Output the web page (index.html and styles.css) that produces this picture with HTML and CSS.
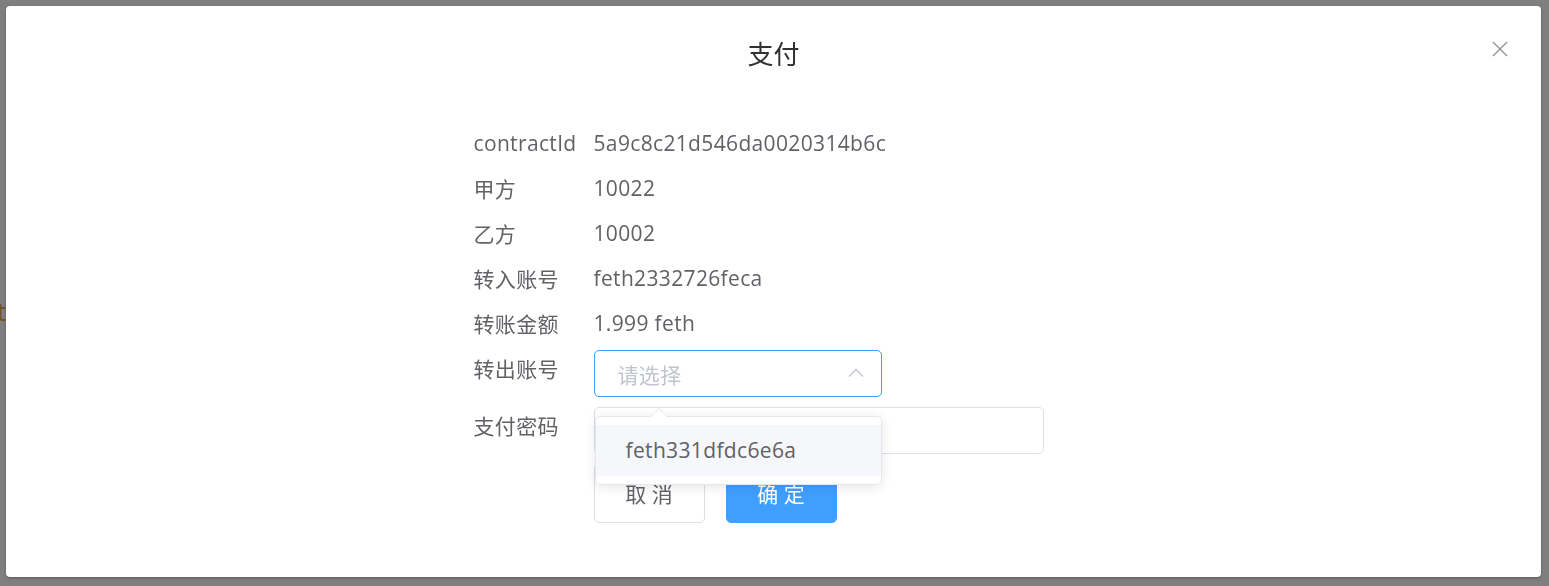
FILE: index.html
```html
<!DOCTYPE html>
<html lang="zh-CN">
<head>
<meta charset="utf-8">
<title>支付</title>
<link rel="stylesheet" href="styles.css">
</head>
<body>
<div class="page">
  <p class="bg-text">t</p>
</div>
<div class="overlay">
  <div class="dialog">
    <div class="dialog-header">
      <span class="dialog-title">支付</span>
      <button class="dialog-close" aria-label="关闭">
        <svg width="16" height="16" viewBox="0 0 16 16"><path d="M1 1L15 15M15 1L1 15" stroke="#909399" stroke-width="1.4" fill="none"/></svg>
      </button>
    </div>
    <div class="form">
      <div class="row"><span class="label">contractId</span><span class="value">5a9c8c21d546da0020314b6c</span></div>
      <div class="row"><span class="label">甲方</span><span class="value">10022</span></div>
      <div class="row"><span class="label">乙方</span><span class="value">10002</span></div>
      <div class="row"><span class="label">转入账号</span><span class="value">feth2332726feca</span></div>
      <div class="row"><span class="label">转账金额</span><span class="value">1.999 feth</span></div>
      <div class="row row-input row-select">
        <span class="label label-input">转出账号</span>
        <div class="select-wrap">
          <div class="select is-focus">
            <span class="placeholder">请选择</span>
            <svg class="chev" width="16" height="10" viewBox="0 0 16 10"><path d="M1 8.5L8 1.5L15 8.5" stroke="#C0C4CC" stroke-width="1.4" fill="none"/></svg>
          </div>
          <div class="dropdown">
            <span class="dropdown-arrow"></span>
            <ul class="options">
              <li class="option hover">feth331dfdc6e6a</li>
            </ul>
          </div>
        </div>
      </div>
      <div class="row row-input row-pass">
        <span class="label label-input">支付密码</span>
        <div class="input"></div>
      </div>
      <div class="row row-buttons">
        <span class="label"></span>
        <div class="buttons">
          <button class="btn btn-default">取 消</button>
          <button class="btn btn-primary">确 定</button>
        </div>
      </div>
    </div>
  </div>
</div>
</body>
</html>
```
FILE: styles.css
```css
html, body {
  margin: 0;
  padding: 0;
  width: 1549px;
  height: 586px;
  overflow: hidden;
  font-family: "Open Sans", "Noto Sans CJK SC", sans-serif;
}
.page {
  width: 1549px;
  height: 586px;
  background: #fff;
  padding-top: 294px;
  box-sizing: border-box;
}
.bg-text {
  margin: 0;
  color: #E6A23C;
  font-size: 25px;
  line-height: 34px;
  text-indent: -3px;
}
.overlay {
  position: fixed;
  inset: 0;
  background: rgba(0, 0, 0, 0.5);
  padding: 6px 8px 9px 6px;
  box-sizing: border-box;
  display: flex;
}
.dialog {
  position: relative;
  flex: 1;
  background: #fff;
  border-radius: 4px;
  box-shadow: 0 1px 3px rgba(0,0,0,.3);
  display: flex;
  flex-direction: column;
  align-items: center;
}
.dialog-header {
  align-self: stretch;
  display: flex;
  justify-content: center;
  padding-top: 30px;
}
.dialog-title {
  font-size: 26px;
  line-height: 36px;
  color: #303133;
}
.dialog-close {
  position: absolute;
  top: 35px;
  right: 33px;
  width: 16px;
  height: 16px;
  padding: 0;
  border: 0;
  background: none;
  display: flex;
}
.form {
  width: 600px;
  margin-top: 48px;
  display: flex;
  flex-direction: column;
}
.row {
  display: flex;
  height: 45px;
  align-items: center;
  font-size: 21px;
  letter-spacing: 0.35px;
  color: #606266;
}
.label {
  width: 120px;
  flex-shrink: 0;
  white-space: nowrap;
}
.value {
  white-space: nowrap;
}
.row-input {
  align-items: flex-start;
  height: auto;
}
.row-select {
  margin-top: 5px;
}
.row-pass {
  margin-top: 10px;
}
.label-input {
  line-height: 38px;
}
.select-wrap {
  position: relative;
}
.select {
  width: 288px;
  height: 47px;
  box-sizing: border-box;
  border: 1px solid #409EFF;
  border-radius: 5px;
  display: flex;
  align-items: center;
  justify-content: space-between;
  padding: 0 17px 0 23px;
}
.placeholder {
  color: #C0C4CC;
  font-size: 21px;
}
.chev {
  margin-top: -2px;
}
.input {
  width: 450px;
  height: 47px;
  box-sizing: border-box;
  border: 1px solid #DCDFE6;
  border-radius: 5px;
}
.dropdown {
  position: absolute;
  z-index: 10;
  top: 66px;
  left: 1px;
  width: 287px;
  box-sizing: border-box;
  background: #fff;
  border: 1px solid #E4E7ED;
  border-radius: 5px;
  box-shadow: 0 2px 12px rgba(0,0,0,.1);
}
.dropdown-arrow {
  position: absolute;
  top: -9px;
  left: 54px;
  width: 0;
  height: 0;
  border-left: 9px solid transparent;
  border-right: 9px solid transparent;
  border-bottom: 9px solid #E4E7ED;
}
.dropdown-arrow::after {
  content: "";
  position: absolute;
  top: 1px;
  left: -8px;
  border-left: 8px solid transparent;
  border-right: 8px solid transparent;
  border-bottom: 8px solid #fff;
}
.options {
  list-style: none;
  margin: 0;
  padding: 8px 0;
}
.option {
  height: 51px;
  line-height: 51px;
  padding: 0 30px;
  font-size: 21px;
  color: #606266;
}
.option.hover {
  background: #F5F7FA;
}
.row-buttons {
  margin-top: 9px;
  height: auto;
}
.buttons {
  display: flex;
  gap: 21px;
}
.btn {
  width: 111px;
  height: 60px;
  box-sizing: border-box;
  border-radius: 5px;
  font-family: "Open Sans", "Noto Sans CJK SC", sans-serif;
  font-size: 21px;
  padding: 0;
}
.btn-default {
  background: #fff;
  border: 1px solid #DCDFE6;
  color: #606266;
}
.btn-primary {
  background: #409EFF;
  border: 1px solid #409EFF;
  color: #fff;
}
```
